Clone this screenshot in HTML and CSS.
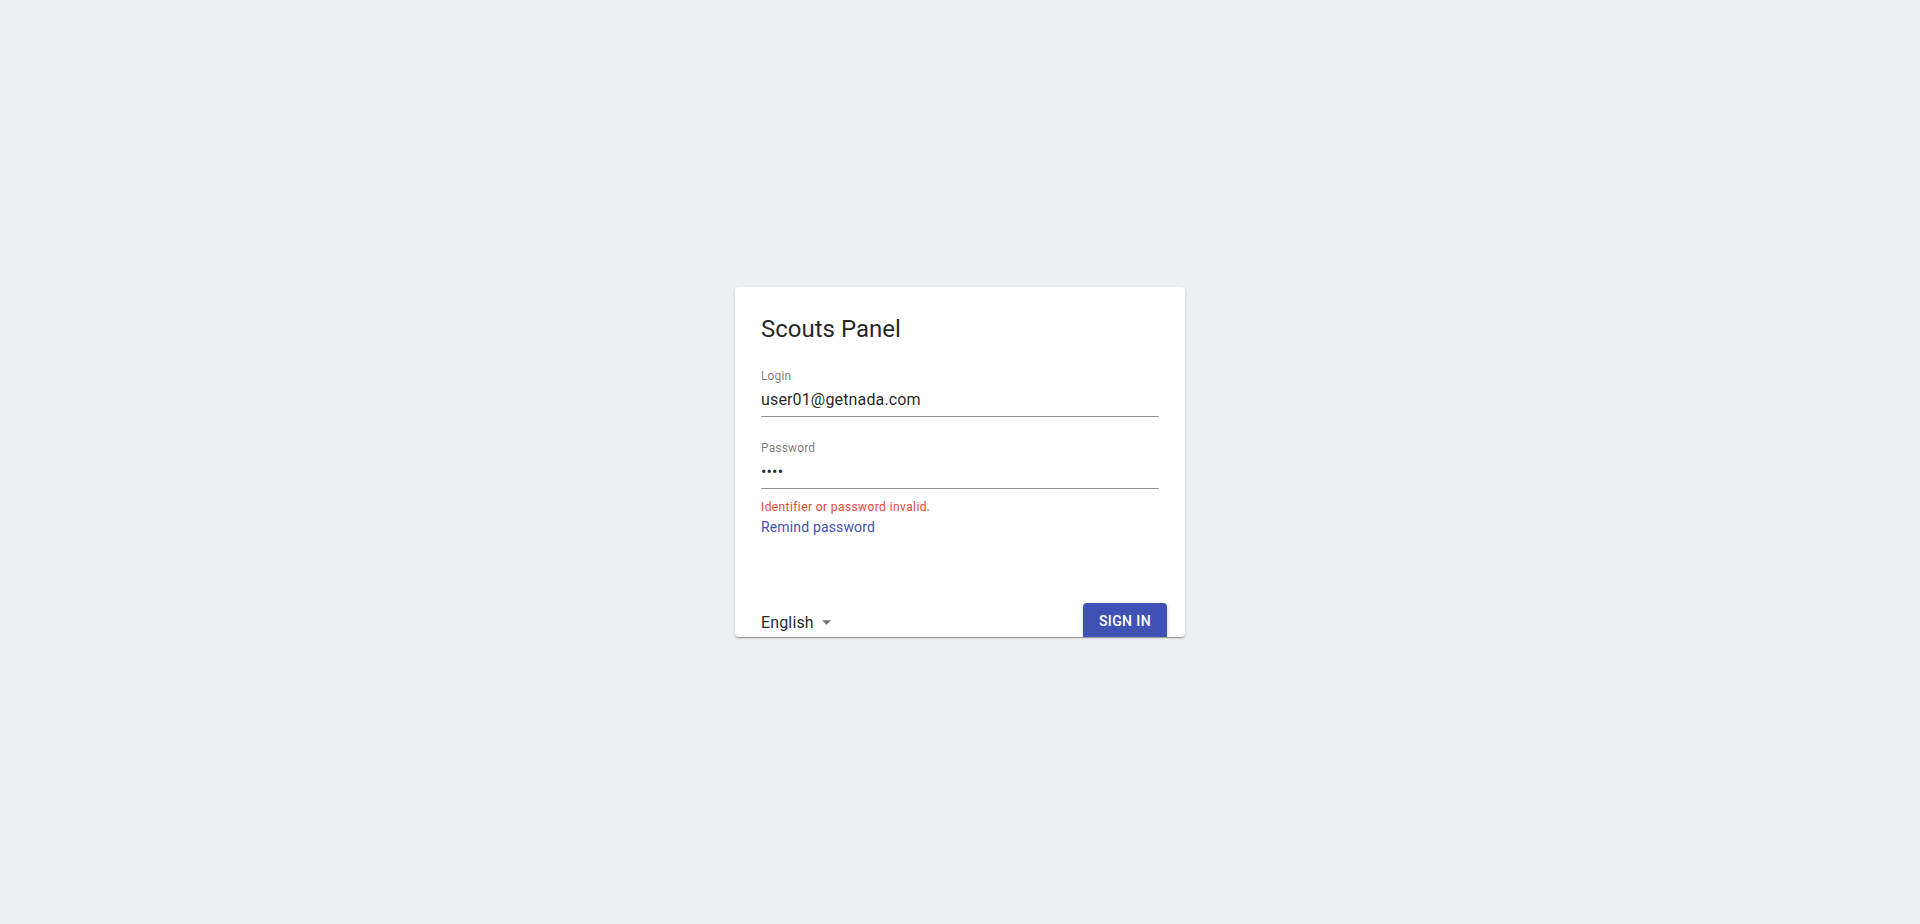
FILE: index.html
```html
<!DOCTYPE html>
<html lang="en">
<head>
<meta charset="utf-8">
<title>Scouts Panel</title>
<link rel="stylesheet" href="styles.css">
</head>
<body>
<main class="page">
  <form class="card">
    <h1 class="title">Scouts Panel</h1>
    <div class="field">
      <label class="label">Login</label>
      <div class="control"><input class="input" type="text" value="user01@getnada.com" readonly></div>
    </div>
    <div class="field">
      <label class="label">Password</label>
      <div class="control"><input class="input" type="password" value="abcd" readonly></div>
    </div>
    <p class="error">Identifier or password invalid.</p>
    <a class="link" href="#">Remind password</a>
    <div class="footer">
      <div class="select">
        <span class="select-value">English</span>
        <svg class="select-arrow" width="9" height="5" viewBox="0 0 10 5"><polygon points="0,0 10,0 5,5" fill="rgba(0,0,0,0.54)"/></svg>
      </div>
      <button class="btn" type="button">SIGN IN</button>
    </div>
  </form>
</main>
</body>
</html>
```
FILE: styles.css
```css
* { box-sizing: border-box; }
html, body { margin: 0; padding: 0; height: 100%; }
body {
  background: #ebeff2;
  font-family: Roboto, "Liberation Sans", Arial, sans-serif;
  color: rgba(0,0,0,0.87);
}
.page {
  height: 924px;
  display: flex;
  align-items: center;
  justify-content: center;
}
.card {
  width: 450px;
  height: 350px;
  background: #fff;
  border-radius: 4px;
  box-shadow: 0 2px 1px -1px rgba(0,0,0,0.2), 0 1px 1px 0 rgba(0,0,0,0.14), 0 1px 3px 0 rgba(0,0,0,0.12);
  overflow: hidden;
  padding: 26px 26px 0 26px;
  display: flex;
  flex-direction: column;
  margin: 0;
}
.title {
  margin: 0;
  font-size: 24px;
  font-weight: 400;
  line-height: 32px;
  color: rgba(0,0,0,0.87);
}
.field { margin-top: 23px; display: flex; flex-direction: column; }
.label {
  font-size: 12px;
  line-height: 16px;
  letter-spacing: 0.15px;
  color: rgba(0,0,0,0.54);
}
.control {
  padding: 6px 0;
  border-bottom: 1px solid rgba(0,0,0,0.42);
}
.input {
  display: block;
  width: 100%;
  height: 20px;
  margin: 0;
  padding: 0;
  border: 0;
  outline: none;
  background: transparent;
  font-family: inherit;
  font-size: 16px;
  line-height: 20px;
  letter-spacing: 0.15px;
  color: rgba(0,0,0,0.87);
}
.error {
  margin: 10px 0 0 0;
  font-size: 12px;
  line-height: 16px;
  letter-spacing: 0.4px;
  color: #f44336;
}
.link {
  margin-top: 2px;
  font-size: 14px;
  line-height: 20px;
  letter-spacing: 0.15px;
  color: #3f51b5;
  text-decoration: none;
  align-self: flex-start;
}
.footer {
  margin-top: 66px;
  margin-right: -8px;
  display: flex;
  align-items: flex-start;
  justify-content: space-between;
}
.select {
  margin-top: 8px;
  display: flex;
  align-items: center;
  gap: 8px;
  font-size: 16px;
  line-height: 24px;
  letter-spacing: 0.15px;
}
.select-arrow { display: block; margin-top: -1px; }
.btn {
  height: 36px;
  padding: 0 16px;
  border: 0;
  border-radius: 4px;
  background: #3f51b5;
  color: #fff;
  font-family: inherit;
  font-size: 14px;
  font-weight: 500;
  letter-spacing: 0.4px;
  line-height: 36px;
  box-shadow: 0 3px 1px -2px rgba(0,0,0,0.2), 0 2px 2px 0 rgba(0,0,0,0.14), 0 1px 5px 0 rgba(0,0,0,0.12);
}
```
